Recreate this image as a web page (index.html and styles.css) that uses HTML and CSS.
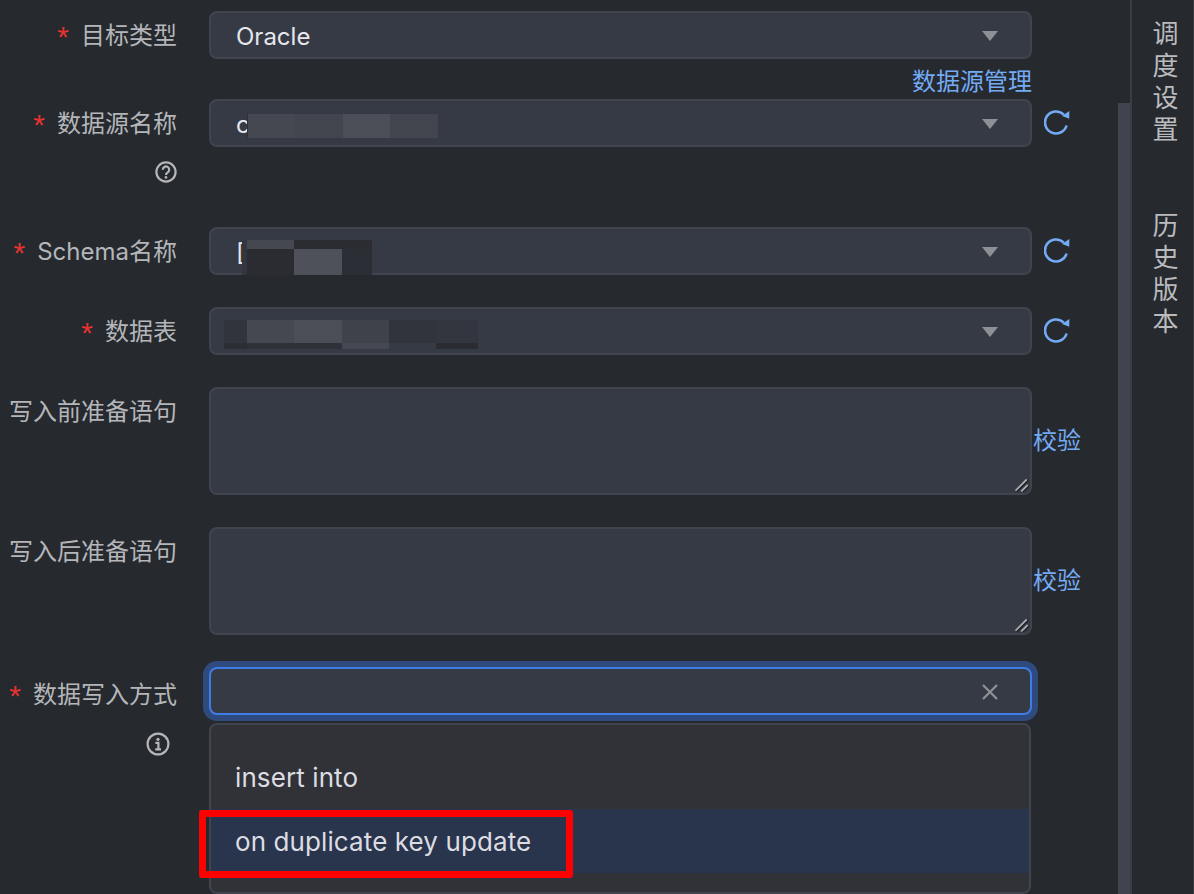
FILE: index.html
```html
<!DOCTYPE html>
<html lang="en">

<head>
    <meta charset="UTF-8" />
    <meta name="viewport" content="width=device-width" />
    <title>数据同步</title>
    <link rel="stylesheet" href="styles.css">
</head>

<body>
    <main class="form">
        <div class="row row_tight">
            <div class="label required">目标类型</div>
            <div class="select"><span>Oracle</span><svg class="caret" viewBox="0 0 16 10"><path d="M0 0H16L8 10Z" /></svg></div>
        </div>
        <div class="link_row"><a class="link">数据源管理</a></div>

        <div class="row">
            <div class="label_box">
                <div class="label required">数据源名称</div>
                <svg class="help_icon" viewBox="0 0 22 22">
                    <circle cx="11" cy="11" r="9.6" />
                    <path d="M7.8 8.7a3.2 3.2 0 1 1 4.9 2.7c-1.1.7-1.7 1.2-1.7 2.5" />
                    <circle class="dot" cx="11" cy="16.4" r="1.3" />
                </svg>
            </div>
            <div class="select">
                <span>c</span>
                <div class="mosaic mosaic_a"><i class="c1"></i><i class="c2"></i><i class="c3"></i><i class="c2"></i></div>
                <svg class="caret" viewBox="0 0 16 10"><path d="M0 0H16L8 10Z" /></svg>
            </div>
            <svg class="refresh" viewBox="0 0 26 26">
                <path d="M19.8 5.7A11 11 0 1 0 22.6 16.5" />
                <path class="tip" d="M25.3 2V9.7L18 7Z" />
            </svg>
        </div>

        <div class="row">
            <div class="label required">Schema名称</div>
            <div class="select">
                <span>[</span>
                <div class="mosaic mosaic_b">
                    <i class="c4"></i><i class="c1"></i><i class="c5"></i><i class="c5"></i>
                    <i class="c4"></i><i class="c5"></i><i class="c6"></i><i class="c7"></i>
                </div>
                <svg class="caret" viewBox="0 0 16 10"><path d="M0 0H16L8 10Z" /></svg>
            </div>
            <svg class="refresh" viewBox="0 0 26 26">
                <path d="M19.8 5.7A11 11 0 1 0 22.6 16.5" />
                <path class="tip" d="M25.3 2V9.7L18 7Z" />
            </svg>
        </div>

        <div class="row">
            <div class="label required">数据表</div>
            <div class="select">
                <div class="mosaic mosaic_c">
                    <i class="c8"></i><i class="c1"></i><i class="c3"></i><i class="c9"></i><i class="c8"></i><i class="c4"></i>
                    <i class="c7"></i><i class="c10"></i><i class="c10"></i><i class="c1"></i><i class="c11"></i><i class="c5"></i>
                </div>
                <svg class="caret" viewBox="0 0 16 10"><path d="M0 0H16L8 10Z" /></svg>
            </div>
            <svg class="refresh" viewBox="0 0 26 26">
                <path d="M19.8 5.7A11 11 0 1 0 22.6 16.5" />
                <path class="tip" d="M25.3 2V9.7L18 7Z" />
            </svg>
        </div>

        <div class="row">
            <div class="label">写入前准备语句</div>
            <div class="textarea_wrap">
                <textarea class="textarea"></textarea>
                <svg class="grip" viewBox="0 0 14 14"><path class="grip_dark" d="M1.5 13.7L13 2.2M7.2 14.5L13.7 8" /><path class="grip_light" d="M.5 12.7L11.7 1.5M6.2 13.5L12.7 7" /></svg>
            </div>
            <a class="link check">校验</a>
        </div>

        <div class="row">
            <div class="label">写入后准备语句</div>
            <div class="textarea_wrap">
                <textarea class="textarea"></textarea>
                <svg class="grip" viewBox="0 0 14 14"><path class="grip_dark" d="M1.5 13.7L13 2.2M7.2 14.5L13.7 8" /><path class="grip_light" d="M.5 12.7L11.7 1.5M6.2 13.5L12.7 7" /></svg>
            </div>
            <a class="link check">校验</a>
        </div>

        <div class="row">
            <div class="label_box">
                <div class="label label_low required">数据写入方式</div>
                <svg class="info_icon" viewBox="0 0 24 24">
                    <circle cx="12" cy="12" r="10.4" />
                    <circle class="dot" cx="12" cy="7.3" r="1.6" />
                    <path d="M9.4 10.8H12.4V17.2M9.2 17.4H15" />
                </svg>
            </div>
            <div class="select_wrap">
                <div class="select focused">
                    <span></span>
                    <svg class="close" viewBox="0 0 16 16"><path d="M1 1L15 15M15 1L1 15" /></svg>
                </div>
                <div class="dropdown">
                    <div class="option">insert into</div>
                    <div class="option active">on duplicate key update</div>
                </div>
                <div class="red_box"></div>
            </div>
        </div>
    </main>

    <div class="scrollbar"><div class="thumb"></div></div>

    <aside class="side">
        <div class="side_tab">调度设置</div>
        <div class="side_tab">历史版本</div>
    </aside>
</body>

</html>
```

FILE: styles.css
```css
/* === page === */

html,
body {
    height: 100%;
}

body {
    margin: 0;
    display: flex;
    height: 894px;
    overflow: hidden;
    background: #26292e;
    color: #e6e7ec;
    font-family: Inter, "Noto Sans CJK SC", sans-serif;
    font-size: 24px;
}

.form {
    width: 1118px;
    flex-shrink: 0;
    padding-top: 11px;
    box-sizing: border-box;
}

/* === rows === */

.row {
    display: flex;
    align-items: flex-start;
    margin-bottom: 32px;
}

.row_tight {
    margin-bottom: 0;
}

.link_row {
    width: 1032px;
    height: 40px;
    display: flex;
    justify-content: flex-end;
    align-items: center;
    line-height: 46px;
    padding-top: 5px;
    box-sizing: border-box;
}

.label,
.label_box {
    width: 177px;
    flex-shrink: 0;
    margin-right: 32px;
}

.label {
    height: 48px;
    line-height: 48px;
    padding-top: 1px;
    box-sizing: border-box;
    text-align: right;
    color: #b4b6ba;
    white-space: nowrap;
}

.label_box {
    height: 96px;
    display: flex;
    flex-direction: column;
    align-items: flex-end;
}

.label_box .label {
    margin-right: 0;
}

.label_box .label_low {
    padding-top: 4px;
}

.required::before {
    content: "*";
    color: #e5332f;
    font-family: "Liberation Sans", sans-serif;
    font-size: 30px;
    line-height: 20px;
    vertical-align: -3px;
    margin-right: 12px;
}

/* === inputs === */

.select,
.textarea {
    width: 823px;
    flex-shrink: 0;
    box-sizing: border-box;
    background: #363a45;
    border: 2px solid #40444f;
    border-radius: 8px;
}

.select {
    position: relative;
    height: 48px;
    padding: 2px 32px 0 25px;
    display: flex;
    align-items: center;
}

.textarea_wrap {
    position: relative;
    flex-shrink: 0;
    height: 108px;
}

.textarea {
    display: block;
    height: 108px;
    margin: 0;
    outline: none;
    resize: none;
}

.grip {
    position: absolute;
    right: 3px;
    bottom: 3px;
    width: 14px;
    height: 14px;
    fill: none;
}

.grip_dark {
    stroke: #17181b;
    stroke-width: 1.4;
}

.grip_light {
    stroke: #a9abaf;
    stroke-width: 1.8;
}

.select_wrap {
    position: relative;
    width: 823px;
}

.focused {
    border-color: #3f7ce8;
    box-shadow: 0 0 0 6px #2f4b7d;
}

.caret {
    width: 16px;
    height: 10px;
    margin-left: auto;
    fill: #8d9095;
}

.close {
    width: 16px;
    height: 16px;
    margin-left: auto;
    fill: none;
    stroke: #8d9095;
    stroke-width: 2.3;
}

/* === pixelated cover over the hidden values === */

.mosaic {
    position: absolute;
    display: grid;
}

.mosaic_a {
    left: 36px;
    top: 13px;
    height: 24px;
    grid-template-columns: 47px 48px 47px 48px;
    border-left: 1px solid #2e3138;
}

.mosaic_b {
    left: 31px;
    top: 11px;
    height: 35px;
    grid-template-columns: 5px 47px 48px 30px;
    grid-template-rows: 9px 26px;
}

.mosaic_c {
    left: 13px;
    top: 11px;
    height: 29px;
    grid-template-columns: 23px 47px 48px 47px 47px 42px;
    grid-template-rows: 23px 6px;
}

.c1 { background: #454851; }
.c2 { background: #42454e; }
.c3 { background: #4b4e56; }
.c4 { background: #33363f; }
.c5 { background: #2a2c31; }
.c6 { background: #4e5159; }
.c7 { background: #2c2e35; }
.c8 { background: #31343c; }
.c9 { background: #3f424b; }
.c10 { background: #2e3138; }
.c11 { background: #363a43; }

/* === links and icons === */

.link {
    color: #74abf5;
    white-space: nowrap;
}

.check {
    margin: 37px 0 0 1px;
    line-height: 34px;
}

.refresh {
    width: 26px;
    height: 26px;
    margin: 10px 0 0 12px;
    flex-shrink: 0;
    fill: none;
    stroke: #74abf5;
    stroke-width: 2.6;
}

.refresh .tip {
    fill: #74abf5;
    stroke: none;
}

.help_icon,
.info_icon {
    fill: none;
    stroke: #b4b6ba;
    stroke-width: 2.2;
}

.help_icon {
    width: 22px;
    height: 22px;
    margin-top: 14px;
}

.info_icon {
    width: 24px;
    height: 24px;
    margin: 17px 7px 0 0;
}

.dot {
    fill: #b4b6ba;
    stroke: none;
}

/* === dropdown === */

.dropdown {
    position: absolute;
    left: 0;
    top: 56px;
    width: 822px;
    height: 171px;
    box-sizing: border-box;
    padding-top: 20px;
    background: #313237;
    border: 2px solid #40444f;
    border-radius: 8px;
    overflow: hidden;
}

.option {
    height: 64px;
    line-height: 66px;
    padding-left: 24px;
    font-size: 26px;
    letter-spacing: 0.1px;
    color: #dcdde2;
}

.option.active {
    background: #29344d;
}

.red_box {
    position: absolute;
    left: -10px;
    top: 143px;
    width: 374px;
    height: 68px;
    box-sizing: border-box;
    border: 7px solid #fe0000;
    border-radius: 3px;
}

/* === scrollbar and side tabs === */

.scrollbar {
    width: 12px;
    flex-shrink: 0;
    padding-top: 103px;
    box-sizing: border-box;
    display: flex;
}

.thumb {
    flex: 1;
    background: #40444f;
}

.side {
    flex: 1;
    border-left: 2px solid #3a3d45;
    border-right: 1px solid #3a3d45;
    padding: 18px 0 0 6px;
    display: flex;
    flex-direction: column;
    align-items: center;
    gap: 64px;
}

.side_tab {
    width: 1em;
    font-size: 26px;
    line-height: 32px;
    color: #b9bbbf;
}
```
